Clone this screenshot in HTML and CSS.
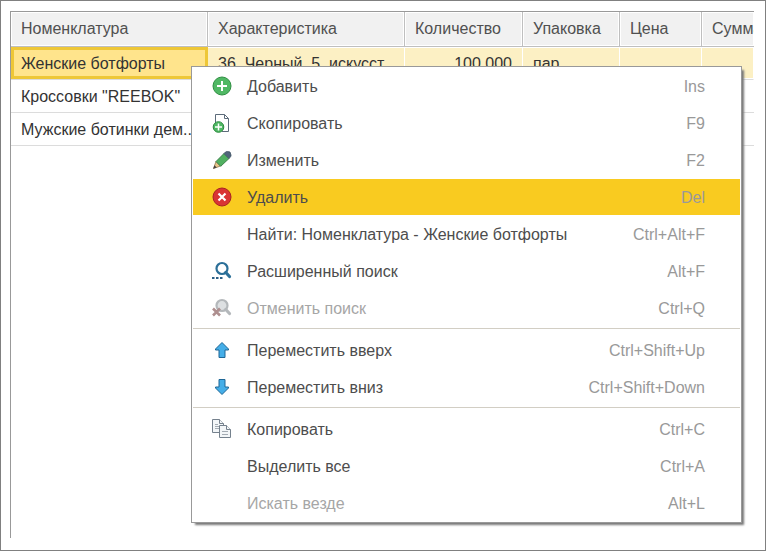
FILE: index.html
```
<!DOCTYPE html>
<html lang="ru">
<head>
    <meta charset="UTF-8">
    <meta name="viewport" content="width=device-width, initial-scale=1.0">
    <title>Номенклатура</title>
    <link rel="stylesheet" href="styles.css">
</head>
<body>
    <div class="window">
        <div class="grid">
            <table class="goods">
                <colgroup>
                    <col class="col-name">
                    <col class="col-feature">
                    <col class="col-count">
                    <col class="col-pack">
                    <col class="col-price">
                    <col>
                </colgroup>
                <thead>
                    <tr>
                        <th>Номенклатура</th>
                        <th>Характеристика</th>
                        <th>Количество</th>
                        <th>Упаковка</th>
                        <th>Цена</th>
                        <th class="last">Сумма</th>
                    </tr>
                </thead>
                <tbody>
                    <tr class="current">
                        <td class="active">Женские ботфорты</td>
                        <td>36, Черный, 5, искусст...</td>
                        <td class="number">100,000</td>
                        <td>пар</td>
                        <td></td>
                        <td></td>
                    </tr>
                    <tr>
                        <td>Кроссовки "REEBOK"</td>
                        <td></td>
                        <td></td>
                        <td></td>
                        <td></td>
                        <td></td>
                    </tr>
                    <tr>
                        <td>Мужские ботинки дем...</td>
                        <td></td>
                        <td></td>
                        <td></td>
                        <td></td>
                        <td></td>
                    </tr>
                </tbody>
            </table>
        </div>

        <div class="menu" role="menu">
            <button class="menu-item" role="menuitem">
                <svg class="icon" viewBox="0 0 20 20"><circle cx="10" cy="10" r="9" fill="#50b864" stroke="#2f8f42"/><path d="M10 5v10M5 10h10" stroke="#fff" stroke-width="2"/></svg>
                <span class="label">Добавить</span><span class="key">Ins</span>
            </button>
            <button class="menu-item" role="menuitem">
                <svg class="icon" viewBox="0 0 20 20"><path d="M3.500 10V1.500h9l4 4v13H10" fill="#fff" stroke="#5c6b7a"/><path d="M12.500 1.500v4h4" fill="none" stroke="#5c6b7a"/><circle cx="6.500" cy="14" r="5.300" fill="#50b864" stroke="#2b8a3e"/><path d="M6.500 10.500v7M3 14h7" stroke="#fff" stroke-width="1.500"/></svg>
                <span class="label">Скопировать</span><span class="key">F9</span>
            </button>
            <button class="menu-item" role="menuitem">
                <svg class="icon" viewBox="0 0 20 20"><path d="M1.500 18.500L4 11.500 8.500 16z" fill="#e9c48a" stroke="#94794c" stroke-width=".8"/><path d="M1.200 18.800l1.200-3.500 2.300 2.300z" fill="#444"/><path d="M4 11.500L12 3.500l5 5L8.700 16.300z" fill="#50b060" stroke="#347a43" stroke-width=".9"/><path d="M12 3.500l1.500-1.500q.8-.7 2-.5l2.500.5 1 3q.2 1-.5 1.800L17 8.500z" fill="#50657a" stroke="#3e5062" stroke-width=".8"/></svg>
                <span class="label">Изменить</span><span class="key">F2</span>
            </button>
            <button class="menu-item selected" role="menuitem">
                <svg class="icon" viewBox="0 0 20 20"><circle cx="10" cy="10" r="9" fill="#d93434" stroke="#a82222"/><path d="M6.500 6.500l7 7M13.500 6.500l-7 7" stroke="#fff" stroke-width="2.200"/></svg>
                <span class="label">Удалить</span><span class="key">Del</span>
            </button>
            <button class="menu-item" role="menuitem">
                <span class="icon"></span>
                <span class="label">Найти: Номенклатура - Женские ботфорты</span><span class="key">Ctrl+Alt+F</span>
            </button>
            <button class="menu-item" role="menuitem">
                <svg class="icon" viewBox="0 0 20 20"><circle cx="10" cy="7.500" r="5.500" fill="#fff" stroke="#2b6f98" stroke-width="2.200"/><path d="M13.800 11.500l3.700 4" stroke="#2b6f98" stroke-width="3.200" stroke-linecap="round"/><path d="M0 17h2.500M4 17h2.500M8 17h2.500" stroke="#2b5f86" stroke-width="2"/></svg>
                <span class="label">Расширенный поиск</span><span class="key">Alt+F</span>
            </button>
            <button class="menu-item" role="menuitem" disabled>
                <svg class="icon" viewBox="0 0 20 20"><circle cx="10" cy="7.500" r="5.500" fill="#dde0e2" stroke="#b4b8bb" stroke-width="2.200"/><path d="M13.800 11.500l3.700 4" stroke="#b4b8bb" stroke-width="3.200" stroke-linecap="round"/><path d="M1 10.500l7 7M8 10.500l-7 7" stroke="#ae8f8f" stroke-width="2.600"/></svg>
                <span class="label">Отменить поиск</span><span class="key">Ctrl+Q</span>
            </button>
            <hr class="menu-line">
            <button class="menu-item" role="menuitem">
                <svg class="icon" viewBox="0 0 20 20"><path d="M10 2.500l6.500 6.500v1h-3.500v7.500h-6V10H3.500V9z" fill="#45aee8" stroke="#1f6796" stroke-linejoin="round"/></svg>
                <span class="label">Переместить вверх</span><span class="key">Ctrl+Shift+Up</span>
            </button>
            <button class="menu-item" role="menuitem">
                <svg class="icon" viewBox="0 0 20 20"><path d="M10 17.500l6.500-6.500v-1h-3.500V2.500h-6V10H3.500v1z" fill="#45aee8" stroke="#1f6796" stroke-linejoin="round"/></svg>
                <span class="label">Переместить вниз</span><span class="key">Ctrl+Shift+Down</span>
            </button>
            <hr class="menu-line">
            <button class="menu-item" role="menuitem">
                <svg class="icon" viewBox="0 0 20 20"><g fill="#f3f6f8" stroke="#75818d"><path d="M.5 .5h7l4 4v9H.5z"/><path d="M7.500 .5v4h4"/><path d="M3 5.500h3M3 7.500h4M3 9.500h4" stroke="#a3abb3"/><path d="M7.500 6.500h7l4 4v8h-11z"/><path d="M14.500 6.500v4h4"/><path d="M10 12.500h6M10 15.500h6" stroke="#a3abb3"/></g></svg>
                <span class="label">Копировать</span><span class="key">Ctrl+C</span>
            </button>
            <button class="menu-item" role="menuitem">
                <span class="icon"></span>
                <span class="label">Выделить все</span><span class="key">Ctrl+A</span>
            </button>
            <button class="menu-item" role="menuitem" disabled>
                <span class="icon"></span>
                <span class="label">Искать везде</span><span class="key">Alt+L</span>
            </button>
        </div>
    </div>
</body>
</html>
```

FILE: styles.css
```
* {
    box-sizing: border-box;
}
body {
    margin: 0;
    font-family: "Liberation Sans", Arial, sans-serif;
    font-size: 16px;
    line-height: 20px;
    color: #333;
    background: #fff;
}
.window {
    position: relative;
    display: flex;
    min-height: 100vh;
    padding: 10px 11px 12px 9px;
    border: 1px solid #808080;
}
.grid {
    flex: 1;
    min-width: 0;
    overflow: hidden;
    border-top: 1px solid #999;
    border-left: 1px solid #999;
}
.goods {
    width: 100%;
    table-layout: fixed;
    border-collapse: separate;
    border-spacing: 0;
}
.col-name,
.col-feature {
    width: 197px;
}
.col-count {
    width: 118px;
}
.col-pack {
    width: 97px;
}
.col-price {
    width: 82px;
}
.goods th,
.goods td {
    padding: 0 0 0 10px;
    overflow: hidden;
    white-space: nowrap;
    text-align: left;
}
.goods th {
    height: 35px;
    font-weight: normal;
    color: #505050;
    background: #f1f1f1;
    border-right: 1px solid #bfbfbf;
    border-bottom: 1px solid #bfbfbf;
    box-shadow: inset 0 0 0 1px #fff;
}
.goods th.last {
    border-right: 0;
}
.goods td {
    height: 33px;
    padding-top: 2px;
    border-bottom: 1px solid #dcdcdc;
}
.goods .current td {
    background: #fcf0c4;
    border-right: 1px solid #fff;
    box-shadow: inset 0 1px #fff, inset 0 -1px #fff;
}
.goods .current td.active {
    background: #ffe48c;
    border-right: 0;
    box-shadow: inset 0 0 0 3px #eec737;
}
.goods td.number {
    padding-right: 10px;
    text-align: right;
}

/* Context menu */
.menu {
    position: absolute;
    top: 65px;
    left: 190px;
    right: 23px;
    display: flex;
    flex-direction: column;
    padding: 1px 1px 0;
    background: #fff;
    border: 1px solid #999;
    box-shadow: 3px 3px 2px -1px #777;
}
.menu-item {
    display: flex;
    align-items: center;
    height: 36px;
    margin: 0 0 1px;
    padding: 0 35px 0 19px;
    border: 0;
    background: none;
    font: inherit;
    color: #4d4d4d;
    text-align: left;
    white-space: nowrap;
}
.menu-item.selected {
    background: #f9cb20;
}
.menu-item:disabled {
    color: #a6a6a6;
}
.icon {
    flex: none;
    width: 20px;
    height: 20px;
    margin-right: 15px;
}
.label,
.key {
    padding-top: 2px;
}
.label {
    flex: 1;
}
.key {
    color: #999;
}
.menu-line {
    width: 100%;
    height: 1px;
    margin: 1px 0 3px;
    border: 0;
    background: #d2cec4;
}
```
